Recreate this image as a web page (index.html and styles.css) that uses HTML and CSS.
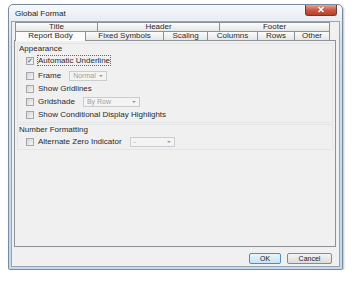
FILE: index.html
```html
<!DOCTYPE html>
<html lang="en">
<head>
    <meta charset="UTF-8">
    <title>Global Format</title>
    <link rel="stylesheet" href="styles.css">
</head>
<body>

<div class="window">
    <div class="title-bar">
        <span class="title">Global Format</span>
        <span class="close-btn">
            <svg width="10" height="7" viewBox="0 0 10 7"><path d="M2.5 1 L7.5 6 M7.5 1 L2.5 6" stroke="#fff" stroke-width="1.5"/></svg>
        </span>
    </div>

    <div class="client">
        <div class="tabs">
            <div class="tab-row back">
                <div class="tab" style="width: 82px">Title</div>
                <div class="tab" style="width: 122px">Header</div>
                <div class="tab" style="width: 111px">Footer</div>
            </div>
            <div class="tab-row front">
                <div class="tab active" style="width: 70px">Report Body</div>
                <div class="tab" style="width: 78px">Fixed Symbols</div>
                <div class="tab" style="width: 44px">Scaling</div>
                <div class="tab" style="width: 50px">Columns</div>
                <div class="tab" style="width: 37px">Rows</div>
                <div class="tab" style="width: 36px">Other</div>
            </div>
        </div>

        <div class="page">
            <div class="group">
                <div class="group-label">Appearance</div>
                <div class="option first">
                    <span class="check checked">&#10003;</span>
                    <span class="focused">Automatic Underline</span>
                </div>
                <div class="option">
                    <span class="check"></span>
                    <span class="lbl">Frame</span>
                    <span class="combo" style="width: 33px">Normal</span>
                </div>
                <div class="option">
                    <span class="check"></span>
                    <span>Show Gridlines</span>
                </div>
                <div class="option">
                    <span class="check"></span>
                    <span class="lbl">Gridshade</span>
                    <span class="combo" style="width: 52px">By Row</span>
                </div>
                <div class="option">
                    <span class="check"></span>
                    <span>Show Conditional Display Highlights</span>
                </div>
            </div>

            <div class="group">
                <div class="group-label">Number Formatting</div>
                <div class="option">
                    <span class="check"></span>
                    <span class="lbl">Alternate Zero Indicator</span>
                    <span class="combo" style="width: 40px">-</span>
                </div>
            </div>
        </div>

        <div class="buttons">
            <button class="btn default">OK</button>
            <button class="btn">Cancel</button>
        </div>
    </div>
</div>

</body>
</html>
```

FILE: styles.css
```css
/* Windows 7 style dialog */
body {
    margin: 0;
    padding: 0;
    background-color: #ffffff;
    font-family: "Liberation Sans", Arial, sans-serif;
    font-size: 8px;
    color: #2a2a2a;
}

.window {
    margin: 4px 0 0 8px;
    width: 329px;
    height: 262px;
    border: 1px solid #7b8a9c;
    border-radius: 5px 5px 2px 2px;
    background: linear-gradient(to bottom, #f7f9fb 0px, #e9eef4 14px, #cddff1 40px, #c3d9ef 100%);
    padding: 0 2px 2px 2px;
    display: flex;
    flex-direction: column;
    box-shadow: 1px 1px 2px rgba(0, 0, 0, 0.25);
}

.title-bar {
    height: 16px;
    display: flex;
    align-items: center;
    justify-content: space-between;
}

.title {
    margin-left: 4px;
    margin-top: 1px;
    color: #1a1a1a;
}

.close-btn {
    width: 30px;
    height: 10px;
    margin-top: -6px;
    margin-right: 3px;
    border: 1px solid #6e3a34;
    border-top: none;
    border-radius: 0 0 3px 3px;
    background: linear-gradient(to bottom, #e5a597, #c75a46 50%, #b8402c);
    display: flex;
    align-items: center;
    justify-content: center;
}

.client {
    flex: 1;
    background-color: #f0f0f0;
    border: 1px solid #9aa4b0;
    padding: 0 3px 0 2px;
    display: flex;
    flex-direction: column;
}

.tabs {
    padding: 0 0 0 1px;
}

.tab-row {
    display: flex;
}

.tab {
    height: 9px;
    line-height: 8px;
    text-align: center;
    border: 1px solid #8d9299;
    border-right: none;
    border-bottom: none;
    background: linear-gradient(to bottom, #fcfcfc, #e6e6e6);
    box-sizing: border-box;
    white-space: nowrap;
    overflow: hidden;
}

.tab:last-child {
    border-right: 1px solid #8d9299;
}

.tab.active {
    background: #fbfbfb;
    height: 10px;
    margin-bottom: -1px;
    position: relative;
    z-index: 1;
}

.page {
    height: 207px;
    border: 1px solid #8d9299;
    background-color: #f0f0f0;
    padding: 2px 2px 0 2px;
    box-sizing: border-box;
}

.group {
    border: 1px solid #e3e5e7;
    padding: 0 0 1px 0;
    margin-bottom: 1px;
}

.group-label {
    height: 9px;
    line-height: 9px;
    margin: 0 0 1px 1px;
}

.option {
    display: flex;
    align-items: center;
    height: 13px;
    padding-left: 8px;
}

.option.first {
    margin-bottom: 2px;
}

.check {
    width: 6px;
    height: 6px;
    border: 1px solid #a3a7ad;
    background: linear-gradient(135deg, #d6d6d6, #f6f6f6);
    margin-right: 4px;
    font-size: 7px;
    line-height: 6px;
    text-align: center;
    color: #3a5ea8;
}

.focused {
    outline: 1px dotted #666;
}

.lbl {
    margin-right: 8px;
}

.combo {
    height: 8px;
    line-height: 8px;
    font-size: 7px;
    border: 1px solid #c9cdd2;
    background-color: #f4f4f4;
    color: #a0a0a0;
    padding-left: 3px;
    position: relative;
    overflow: hidden;
}

.combo::after {
    content: "";
    position: absolute;
    right: 3px;
    top: 3px;
    border-left: 2px solid transparent;
    border-right: 2px solid transparent;
    border-top: 2px solid #999;
}

.buttons {
    display: flex;
    justify-content: flex-end;
    gap: 6px;
    padding: 6px 4px 0 0;
}

.btn {
    font-family: inherit;
    font-size: 7px;
    height: 11px;
    padding: 0;
    border: 1px solid #8a8a8a;
    border-radius: 2px;
    background: linear-gradient(to bottom, #f4f4f4, #dcdcdc);
    color: #222;
    width: 45px;
    line-height: 9px;
}

.btn.default {
    width: 32px;
    border-color: #4d8fc4;
    background: linear-gradient(to bottom, #eaf5fc, #c5e3f6);
}
```
